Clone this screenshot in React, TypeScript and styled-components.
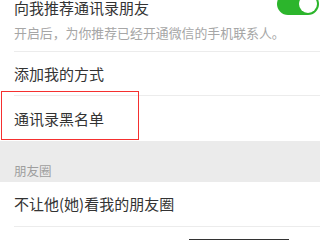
import React from 'react';
import styled, { createGlobalStyle } from 'styled-components';

const GlobalStyle = createGlobalStyle`
	html, body {
		margin: 0;
		padding: 0;
		background: #fff;
	}
	body {
		font-family: 'Noto Sans CJK SC', 'Noto Sans', sans-serif;
		overflow: hidden;
	}
`;

const Page = styled.div`
	position: relative;
	width: 320px;
	height: 240px;
	overflow: hidden;
	background: #fff;
`;

const List = styled.div`
	display: flex;
	flex-direction: column;
	margin-top: -12px;
`;

const Cell = styled.div<{ $h?: number; $divider?: boolean }>`
	position: relative;
	display: flex;
	align-items: center;
	margin-left: 14px;
	height: ${p => (p.$h ? `${p.$h}px` : 'auto')};
	border-bottom: ${p => (p.$divider ? '1px solid #ececec' : 'none')};
	box-sizing: border-box;
`;

const SwitchCell = styled.div`
	display: flex;
	flex-direction: column;
	gap: 8px;
	margin-left: 14px;
	padding: 12px 1px 9px 0;
	border-bottom: 1px solid #ececec;
`;

const TitleRow = styled.div`
	display: flex;
	align-items: center;
	justify-content: space-between;
	height: 16px;
`;

const Title = styled.span<{ $lh?: number }>`
	font-size: 15px;
	line-height: ${p => p.$lh ?? 20}px;
	color: #333;
	white-space: nowrap;
`;

const Desc = styled.span`
	font-size: 12.9px;
	line-height: 18px;
	color: #a6a6a6;
	white-space: nowrap;
`;

const Toggle = styled.div`
	position: relative;
	width: 42px;
	height: 22px;
	margin-top: -8px;
	border-radius: 11px;
	background: #2cb52c;
	flex-shrink: 0;

	&::after {
		content: '';
		position: absolute;
		right: 2px;
		top: 2px;
		width: 18px;
		height: 18px;
		border-radius: 50%;
		background: #fff;
	}
`;

const SectionHeader = styled.div`
	height: 41px;
	background: #ebebeb;
	padding: 22px 0 0 14px;
	box-sizing: border-box;
	font-size: 12.5px;
	line-height: 16px;
	color: #9e9e9e;
`;

const Highlight = styled.div`
	position: absolute;
	left: -13px;
	top: -5px;
	width: 138px;
	height: 49px;
	border: 1px solid #f5302f;
	box-sizing: border-box;
	pointer-events: none;
`;

const CutBar = styled.div`
	position: absolute;
	left: 189px;
	top: 239px;
	width: 100px;
	height: 6px;
	background: #333;
`;

export default function App() {
	return (
		<Page>
			<GlobalStyle />
			<List>
				<SwitchCell>
					<TitleRow>
						<Title $lh={16}>向我推荐通讯录朋友</Title>
						<Toggle />
					</TitleRow>
					<Desc>开启后，为你推荐已经开通微信的手机联系人。</Desc>
				</SwitchCell>
				<Cell $h={44} $divider>
					<Title>添加我的方式</Title>
				</Cell>
				<Cell $h={45}>
					<Title>通讯录黑名单</Title>
					<Highlight />
				</Cell>
				<SectionHeader>朋友圈</SectionHeader>
				<Cell $h={45} $divider>
					<Title>不让他(她)看我的朋友圈</Title>
				</Cell>
				<Cell $h={45}>
					<Title>不看他(她)的朋友圈</Title>
				</Cell>
			</List>
			<CutBar />
		</Page>
	);
}
